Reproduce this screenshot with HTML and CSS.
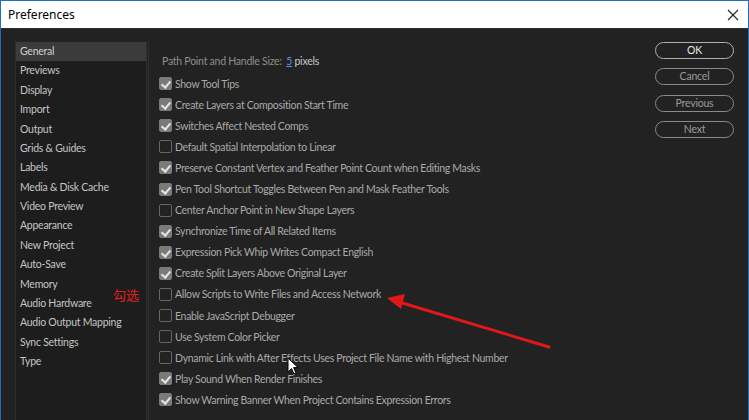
FILE: index.html
```html
<!DOCTYPE html>
<html>
<head>
<meta charset="utf-8">
<link rel="stylesheet" href="styles.css">
</head>
<body>
<div class="window">
  <div class="titlebar">
    <span class="title">Preferences</span>
    <svg class="close" width="12" height="12" viewBox="0 0 12 12"><path d="M1 1L11 11M11 1L1 11" stroke="#222" stroke-width="1.1" fill="none"/></svg>
  </div>
  <div class="body">
    <div class="sidebar">
      <div class="nav active">General</div>
      <div class="nav">Previews</div>
      <div class="nav">Display</div>
      <div class="nav">Import</div>
      <div class="nav">Output</div>
      <div class="nav">Grids &amp; Guides</div>
      <div class="nav">Labels</div>
      <div class="nav">Media &amp; Disk Cache</div>
      <div class="nav">Video Preview</div>
      <div class="nav">Appearance</div>
      <div class="nav">New Project</div>
      <div class="nav">Auto-Save</div>
      <div class="nav">Memory</div>
      <div class="nav">Audio Hardware</div>
      <div class="nav">Audio Output Mapping</div>
      <div class="nav">Sync Settings</div>
      <div class="nav">Type</div>
    </div>
    <div class="main">
      <div class="size-row">Path Point and Handle Size: <span class="num">5</span> <span class="unit">pixels</span></div>
      <div class="opt"><span class="cb on"></span>Show Tool Tips</div>
      <div class="opt"><span class="cb on"></span>Create Layers at Composition Start Time</div>
      <div class="opt"><span class="cb on"></span>Switches Affect Nested Comps</div>
      <div class="opt"><span class="cb"></span>Default Spatial Interpolation to Linear</div>
      <div class="opt"><span class="cb on"></span>Preserve Constant Vertex and Feather Point Count when Editing Masks</div>
      <div class="opt"><span class="cb on"></span>Pen Tool Shortcut Toggles Between Pen and Mask Feather Tools</div>
      <div class="opt"><span class="cb"></span>Center Anchor Point in New Shape Layers</div>
      <div class="opt"><span class="cb on"></span>Synchronize Time of All Related Items</div>
      <div class="opt"><span class="cb on"></span>Expression Pick Whip Writes Compact English</div>
      <div class="opt"><span class="cb on"></span>Create Split Layers Above Original Layer</div>
      <div class="opt"><span class="cb"></span>Allow Scripts to Write Files and Access Network</div>
      <div class="opt"><span class="cb"></span>Enable JavaScript Debugger</div>
      <div class="opt"><span class="cb"></span>Use System Color Picker</div>
      <div class="opt"><span class="cb"></span>Dynamic Link with After Effects Uses Project File Name with Highest Number</div>
      <div class="opt"><span class="cb on"></span>Play Sound When Render Finishes</div>
      <div class="opt"><span class="cb on"></span>Show Warning Banner When Project Contains Expression Errors</div>
    </div>
    <div class="buttons">
      <div class="btn primary">OK</div>
      <div class="btn">Cancel</div>
      <div class="btn">Previous</div>
      <div class="btn">Next</div>
    </div>
  </div>
  <div class="note">勾选</div>
  <svg class="arrow" width="749" height="420" viewBox="0 0 749 420">
    <line x1="548" y1="347" x2="398" y2="302" stroke="#e01818" stroke-width="3" stroke-linecap="round"/>
    <polygon points="386,298 404,294 400,309" fill="#e01818"/>
  </svg>
  <svg class="cursor" width="12" height="19" viewBox="0 0 12 19">
    <path d="M1 1L1 15L4.5 11.5L7 17L9 16L6.6 10.6L11 10.6Z" fill="#fff" stroke="#000" stroke-width="1"/>
  </svg>
</div>
</body>
</html>
```
FILE: styles.css
```css
* { box-sizing: border-box; }
html, body { margin: 0; padding: 0; }
body {
  width: 749px;
  height: 420px;
  overflow: hidden;
  background: #232323;
  font-family: "Lato", "Open Sans", sans-serif;
}
.window {
  position: relative;
  width: 749px;
  height: 420px;
  border-left: 1px solid #1f6fb8;
  border-right: 1px solid #1f6fb8;
  background: #222222;
  display: flex;
  flex-direction: column;
}
.titlebar {
  height: 28px;
  background: #ffffff;
  border-top: 1px solid #1f6fb8;
  display: flex;
  align-items: center;
  justify-content: space-between;
  padding: 0 8px 0 7px;
  flex-shrink: 0;
}
.title {
  font-family: "Noto Sans", "Open Sans", sans-serif;
  font-size: 12px;
  color: #000;
}
.close { margin-right: 1px; }
.body {
  flex: 1;
  display: flex;
  padding: 12px 0 0 14px;
  border-top: 1px solid #2c2c2c;
}
.sidebar {
  width: 132px;
  background: #1d1d1d;
  border-left: 1px solid #2e2e2e;
  border-right: 1px solid #2e2e2e;
  border-top: 1px solid #262626;
  padding-top: 0;
  margin-bottom: -20px;
}
.nav {
  height: 19.375px;
  line-height: 18px;
  padding-left: 4px;
  font-size: 10.5px;
  letter-spacing: -0.25px;
  color: #c4c4c4;
  white-space: nowrap;
}
.nav.active { background: #3b3b3b; color: #d0d0d0; }
.main {
  flex: 1;
  padding: 12px 0 0 10px;
  border-left: 1px solid #2e2e2e;
  margin-left: 1px;
}
.size-row {
  height: 16px;
  line-height: 16px;
  font-size: 10.5px;
  letter-spacing: -0.25px;
  color: #8e8e8e;
  padding-left: 3px;
  margin-bottom: 4px;
}
.num { color: #4f8fe0; text-decoration: underline; margin-left: 2px; }
.unit { color: #c8c8c8; }
.opt {
  height: 21.1px;
  display: flex;
  align-items: center;
  font-size: 10.5px;
  letter-spacing: -0.32px;
  color: #a9a9a9;
  white-space: nowrap;
}
.cb {
  width: 13px;
  height: 13px;
  border-radius: 2px;
  border: 1px solid #666;
  margin-right: 3px;
  flex-shrink: 0;
  position: relative;
}
.cb.on {
  background: #7a7a7a;
  border-color: #7a7a7a;
}
.cb.on::after {
  content: "";
  position: absolute;
  left: 3px;
  top: 1px;
  width: 4px;
  height: 7px;
  border-right: 2px solid #e4e4e4;
  border-bottom: 2px solid #e4e4e4;
  transform: rotate(40deg);
}
.buttons {
  width: 93px;
  padding-top: 1px;
  display: flex;
  flex-direction: column;
  gap: 9.3px;
}
.btn {
  width: 79px;
  height: 17px;
  border: 1px solid #8a8a8a;
  border-radius: 9px;
  text-align: center;
  line-height: 15px;
  font-size: 10.5px;
  letter-spacing: -0.2px;
  color: #9a9a9a;
  flex-shrink: 0;
}
.btn.primary { color: #e8e8e8; border-color: #b0b0b0; }
.note {
  position: absolute;
  left: 112px;
  top: 285px;
  font-family: "Noto Sans CJK SC", sans-serif;
  font-size: 13px;
  color: #e02020;
}
.arrow { position: absolute; left: 0; top: 0; pointer-events: none; }
.cursor { position: absolute; left: 286px; top: 357px; }
```
